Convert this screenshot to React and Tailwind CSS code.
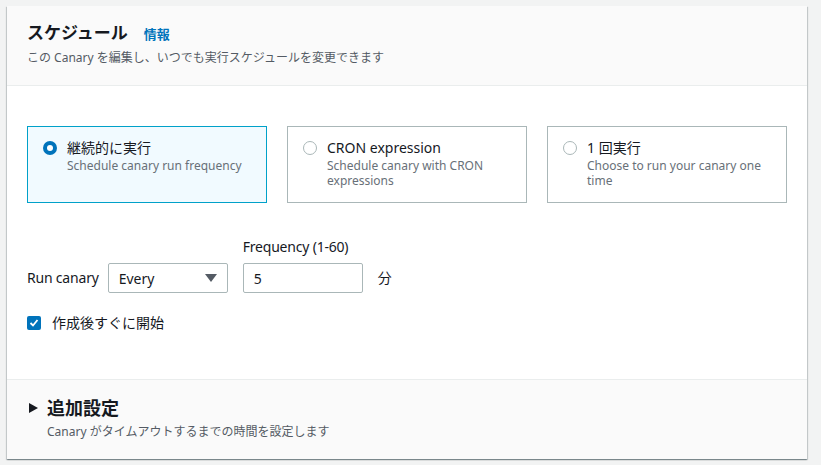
const font = { fontFamily: '"Noto Sans", "Noto Sans CJK JP", sans-serif' };

function Radio({ checked }) {
  return checked ? (
    <span className="mt-[3px] flex h-[14px] w-[14px] shrink-0 items-center justify-center rounded-full bg-[#0073bb]">
      <span className="h-[6px] w-[6px] rounded-full bg-white" />
    </span>
  ) : (
    <span className="mt-[3px] h-[14px] w-[14px] shrink-0 rounded-full border-[1.5px] border-[#aab7b8] bg-white" />
  );
}

function Tile({ checked, title, desc }) {
  return (
    <div
      className={
        checked
          ? "flex h-[77px] gap-[10px] border border-[#00a1c9] bg-[#f1faff] px-[15px] pt-[11px]"
          : "flex h-[77px] gap-[10px] border border-[#aab7b8] bg-white px-[15px] pt-[11px]"
      }
    >
      <Radio checked={checked} />
      <div>
        <div className="text-[14px] leading-[20px] text-[#16191f]">{title}</div>
        <div className="text-[12px] leading-[15px] text-[#687078]">{desc}</div>
      </div>
    </div>
  );
}

export default function App() {
  return (
    <div className="h-[465px] w-[821px] bg-[#f2f3f3] pl-[7px] pt-[6px]" style={font}>
      <div className="w-[800px] bg-white shadow-[0_1px_1px_0_rgba(0,28,36,0.3),1px_1px_1px_0_rgba(0,28,36,0.15),-1px_1px_1px_0_rgba(0,28,36,0.15)]">
        <div className="h-[80px] border-b border-[#eaeded] bg-[#fafafa] px-[20px] pt-[16px]">
          <div className="flex items-baseline gap-[16px]">
            <h2 className="text-[17px] font-bold leading-[22px] text-[#16191f]">スケジュール</h2>
            <a className="text-[13px] font-bold text-[#0073bb]">情報</a>
          </div>
          <p className="mt-[5px] text-[12px] leading-[16px] text-[#545b64]">
            この Canary を編集し、いつでも実行スケジュールを変更できます
          </p>
        </div>

        <div className="h-[293px] px-[20px] pt-[40px]">
          <div className="grid grid-cols-3 gap-[20px]">
            <Tile checked title="継続的に実行" desc="Schedule canary run frequency" />
            <Tile title="CRON expression" desc="Schedule canary with CRON expressions" />
            <Tile title="1 回実行" desc="Choose to run your canary one time" />
          </div>

          <div className="mt-[34px] flex items-end">
            <span className="mb-[5px] mr-[9px] text-[14px] leading-[20px] tracking-[-0.2px] text-[#16191f]">Run canary</span>
            <div className="flex h-[30px] w-[120px] items-center justify-between rounded-[2px] border border-[#aab7b8] px-[10px]">
              <span className="text-[14px] text-[#16191f]">Every</span>
              <svg width="12" height="8" viewBox="0 0 12 8">
                <path d="M0 0h12L6 8z" fill="#545b64" />
              </svg>
            </div>
            <div className="ml-[15px] flex flex-col">
              <label className="mb-[6px] text-[14px] leading-[20px] tracking-[-0.2px] text-[#16191f]">Frequency (1-60)</label>
              <div className="flex h-[30px] w-[120px] items-center rounded-[2px] border border-[#aab7b8] px-[10px] text-[14px] text-[#16191f]">
                5
              </div>
            </div>
            <span className="mb-[5px] ml-[15px] text-[14px] leading-[20px] text-[#16191f]">分</span>
          </div>

          <div className="mt-[20px] flex items-center gap-[11px]">
            <span className="flex h-[14px] w-[14px] items-center justify-center rounded-[2px] bg-[#0073bb]">
              <svg width="10" height="10" viewBox="0 0 10 10">
                <path d="M1.5 5l2.5 2.5L8.5 2" stroke="white" strokeWidth="1.8" fill="none" />
              </svg>
            </span>
            <span className="text-[14px] leading-[20px] text-[#16191f]">作成後すぐに開始</span>
          </div>
        </div>

        <div className="h-[80px] border-t border-[#eaeded] bg-[#fafafa] px-[22px] pt-[17px]">
          <div className="flex items-center gap-[9px]">
            <svg width="9" height="10" viewBox="0 0 9 10">
              <path d="M0 0l9 5-9 5z" fill="#16191f" />
            </svg>
            <span className="text-[18px] font-bold leading-[22px] text-[#16191f]">追加設定</span>
          </div>
          <p className="ml-[18px] mt-[5px] text-[12px] leading-[16px] text-[#545b64]">
            Canary がタイムアウトするまでの時間を設定します
          </p>
        </div>
      </div>
    </div>
  );
}
